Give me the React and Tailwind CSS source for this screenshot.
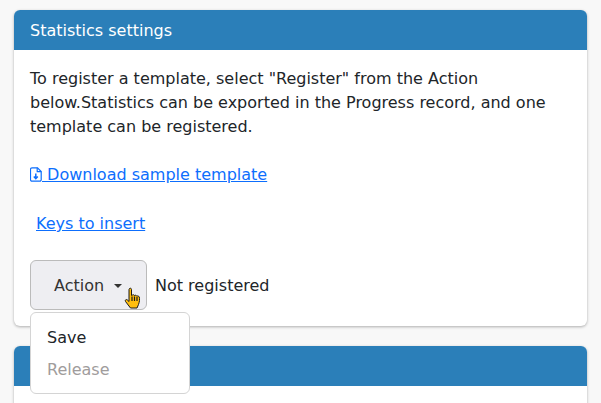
import React from 'react';

const FileDownIcon = () => (
  <svg viewBox="0 0 12 15" className="inline-block w-[12px] h-[15px] align-[-2px]" fill="none" stroke="currentColor" strokeWidth="1.2">
    <path d="M2 .8h5.500L11.200 4.500v8.200a1.500 1.500 0 0 1-1.500 1.500H2a1.500 1.500 0 0 1-1.500-1.500V2.300A1.500 1.500 0 0 1 2 .8z" />
    <path d="M7.200 .8v3.800h4" />
    <path d="M5.800 6.500v5M3.800 9.500l2 2.200 2-2.200" strokeWidth="1.500" />
  </svg>
);

const HandCursor = () => (
  <svg viewBox="0 0 17 23" className="absolute left-[124px] top-[287px] w-[17px] h-[23px]">
    <path
      d="M5.500 1.500c1-.8 2 0 2 1v6l1-.5c1-.5 1.800-.2 2 .5.800-.5 1.800-.3 2 .5.800-.3 2.500 0 2.800 1 .5 2 .2 5-.8 7.500l-1.500 3.500H6.500L1.500 14.500c-.8-1.200.5-2.500 1.700-1.700L5 14.500V2.500z"
      fill="#ffbe0f"
      stroke="#1a1a1a"
      strokeWidth="1"
      strokeLinejoin="round"
    />
    <path d="M8 9.500v4.500M10.500 9.500v4.500M13 10v4" stroke="#1a1a1a" strokeWidth="1.200" />
  </svg>
);

const App = () => {
  return (
    <div className="relative h-[403px] w-[601px] overflow-hidden bg-[#f8f8f8] px-[14px] pt-[10px] text-[16px] leading-[24px] text-[#212529] font-['DejaVu_Sans',sans-serif]">
      {/* Statistics settings card */}
      <div className="h-[316px] rounded-[6px] bg-white shadow-[0_1px_3px_rgba(0,0,0,0.3)] overflow-hidden">
        <div className="flex h-[40px] items-center bg-[#2b7fb9] px-[16px] pt-px text-white">Statistics settings</div>
        <div className="px-[16px] pt-[17px]">
          <p>
            To register a template, select "Register" from the Action below.Statistics can be exported in the Progress record, and one template can be registered.
          </p>
          <p className="mt-[24px]">
            <a href="#" className="text-[#0d6efd] underline">
              <FileDownIcon /> Download sample template
            </a>
          </p>
          <p className="mt-[25px] pl-[6px]">
            <a href="#" className="text-[#0d6efd] underline">Keys to insert</a>
          </p>
          <div className="mt-[24px] flex items-center gap-[8px]">
            <button className="flex h-[50px] w-[117px] items-center gap-[10px] rounded-[6px] border border-[#bbbbbb] bg-[#eeeef2] pl-[23px] pt-px text-[#333333]">
              Action
              <span className="h-0 w-0 border-x-[4px] border-t-[4px] border-x-transparent border-t-[#333333]" />
            </button>
            <span className="pt-px">Not registered</span>
          </div>
        </div>
      </div>

      {/* Next card, mostly under the menu */}
      <div className="mt-[20px] h-[80px] rounded-[6px] bg-white shadow-[0_1px_3px_rgba(0,0,0,0.3)] overflow-hidden">
        <div className="h-[40px] bg-[#2b7fb9]" />
      </div>

      {/* Dropdown menu */}
      <div className="absolute left-[30px] top-[312px] h-[82px] w-[160px] rounded-[6px] border border-[#d4d4d4] bg-white pt-[13px]">
        <div className="px-[16px] text-[#212529]">Save</div>
        <div className="mt-[8px] px-[16px] text-[#a09c9c]">Release</div>
      </div>

      <HandCursor />
    </div>
  );
};

export default App;
